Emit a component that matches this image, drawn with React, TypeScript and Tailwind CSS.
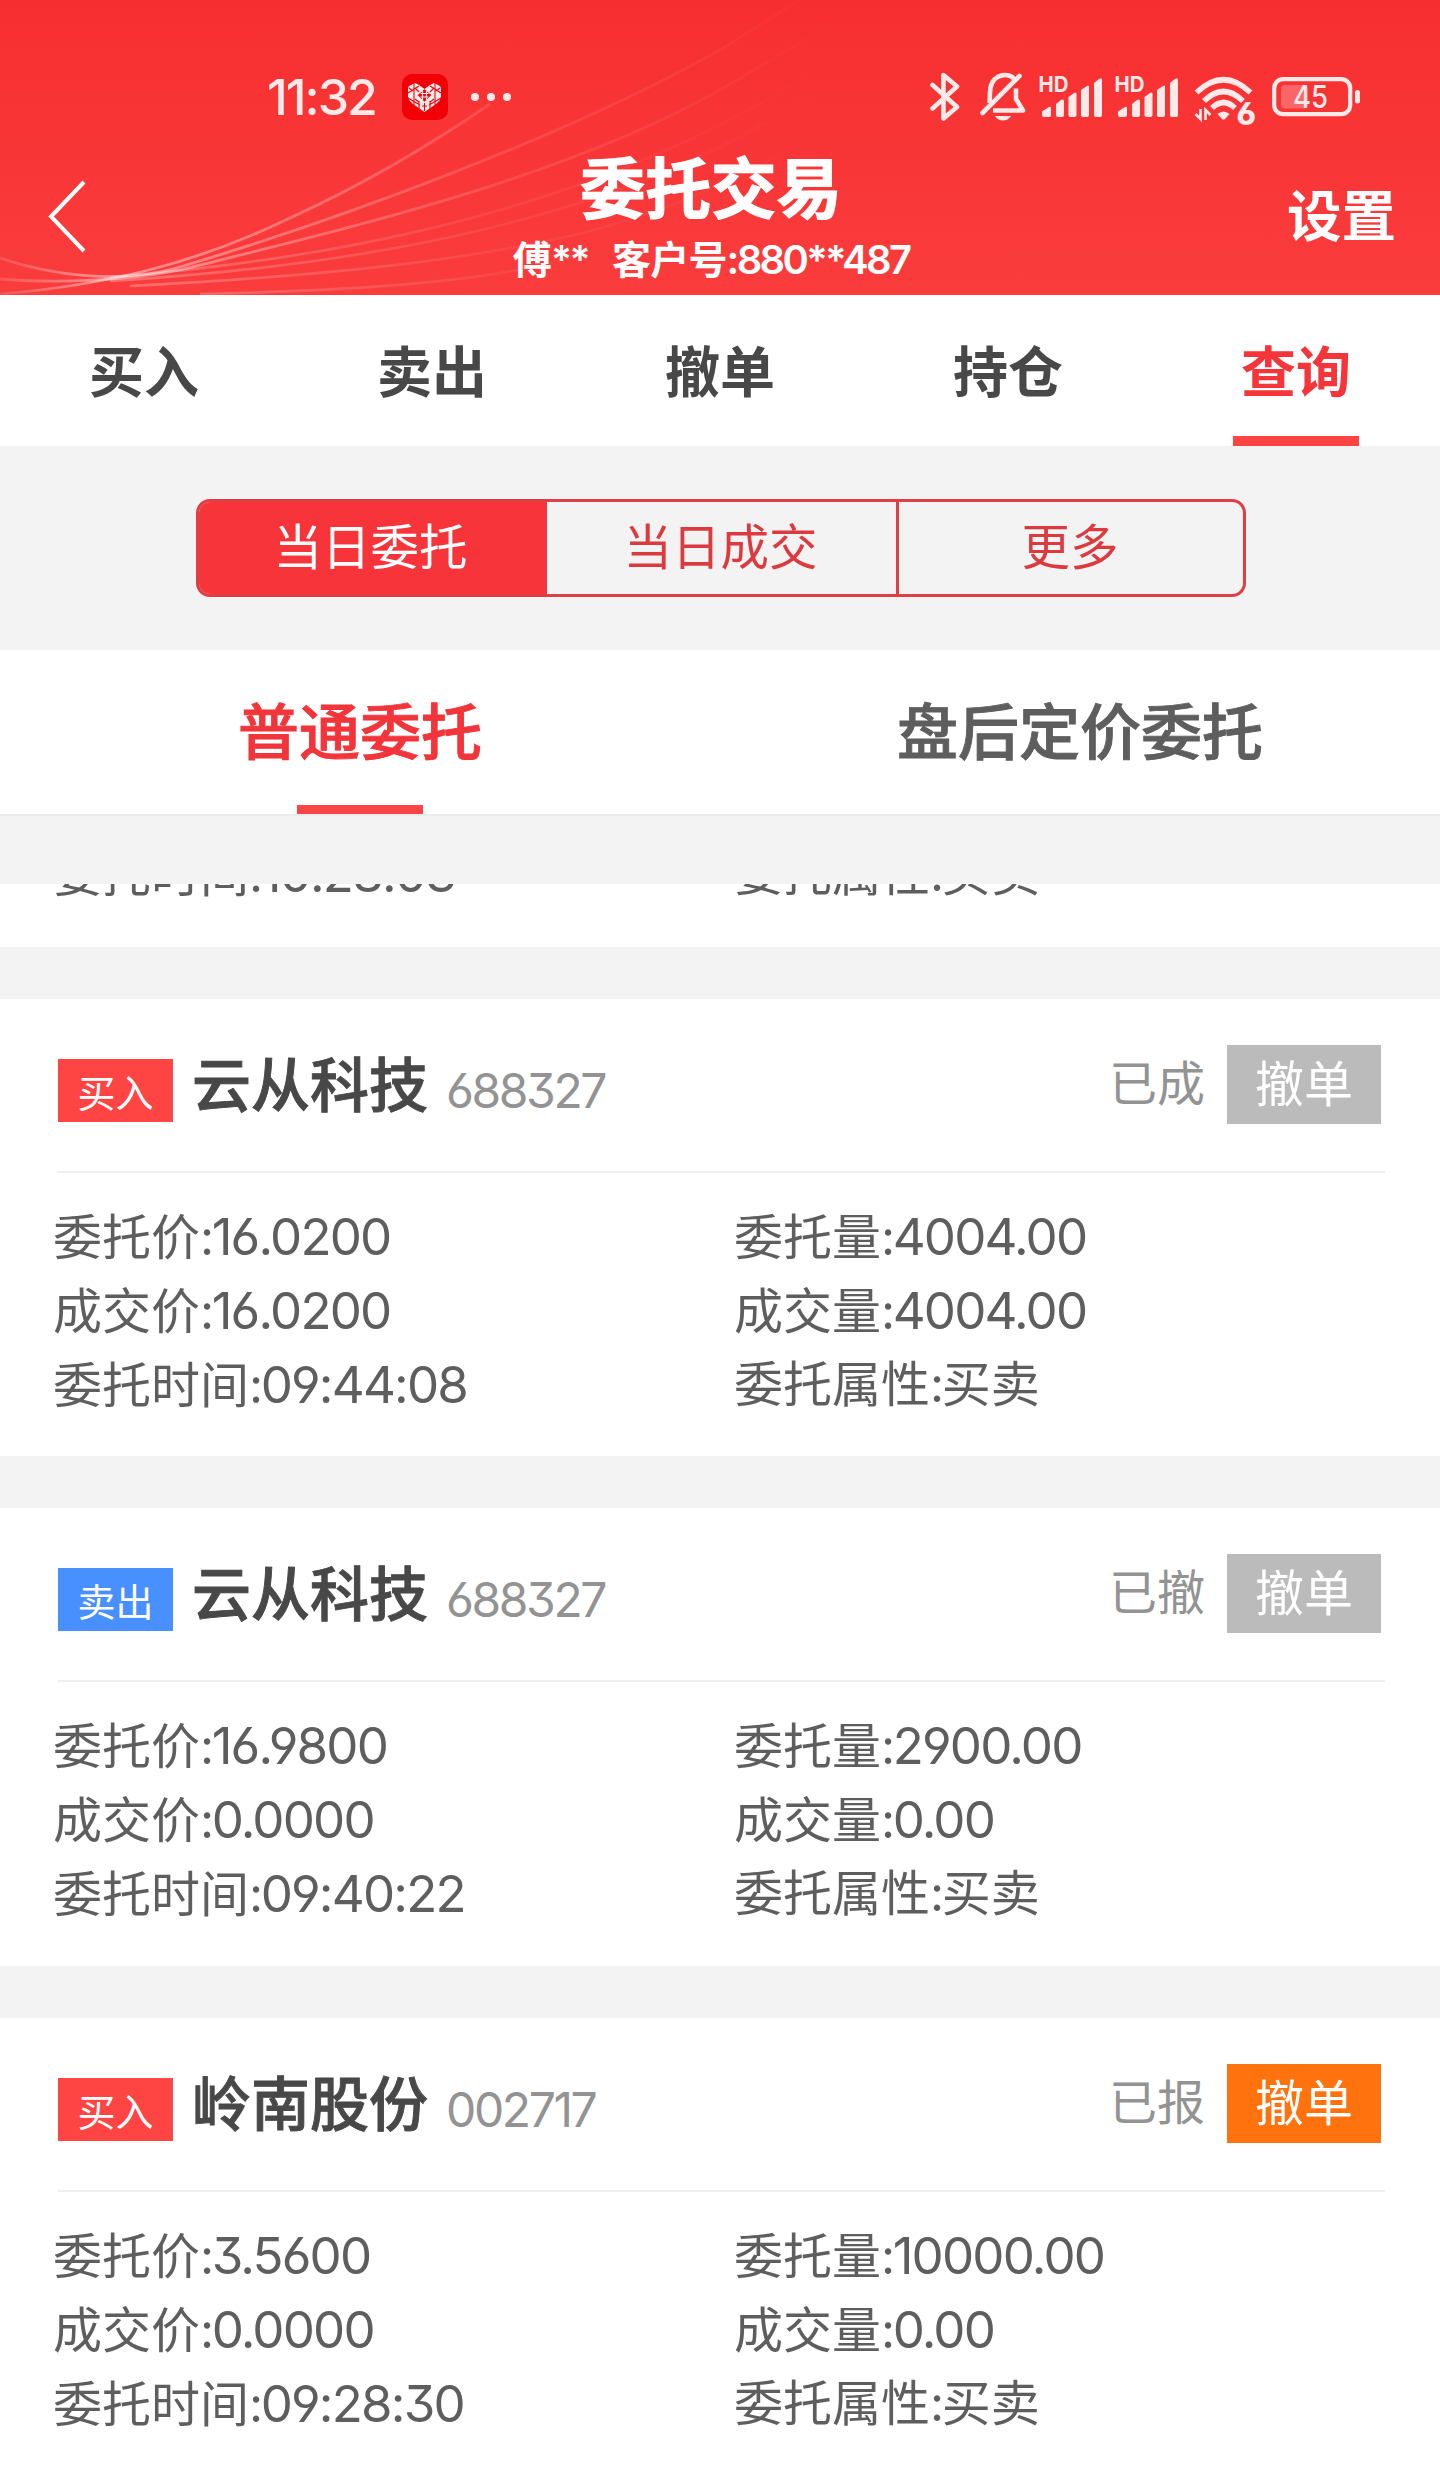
import { useState } from 'react'
import clsx from 'clsx'

type Order = {
    side: 'buy' | 'sell'
    name: string
    code: string
    status: string
    cancellable: boolean
    price: string
    amount: string
    dealPrice: string
    dealAmount: string
    time: string
}

const orders: Order[] = [
    {
        side: 'buy',
        name: '云从科技',
        code: '688327',
        status: '已成',
        cancellable: false,
        price: '16.0200',
        amount: '4004.00',
        dealPrice: '16.0200',
        dealAmount: '4004.00',
        time: '09:44:08',
    },
    {
        side: 'sell',
        name: '云从科技',
        code: '688327',
        status: '已撤',
        cancellable: false,
        price: '16.9800',
        amount: '2900.00',
        dealPrice: '0.0000',
        dealAmount: '0.00',
        time: '09:40:22',
    },
    {
        side: 'buy',
        name: '岭南股份',
        code: '002717',
        status: '已报',
        cancellable: true,
        price: '3.5600',
        amount: '10000.00',
        dealPrice: '0.0000',
        dealAmount: '0.00',
        time: '09:28:30',
    },
]

const mainTabs = ['买入', '卖出', '撤单', '持仓', '查询']
const segments = ['当日委托', '当日成交', '更多']
const orderTabs = ['普通委托', '盘后定价委托']

function HeaderWaves() {
    return (
        <svg className="absolute inset-0" width="1440" height="295" viewBox="0 0 1440 295" fill="none">
            <defs>
                <linearGradient id="wave" gradientUnits="userSpaceOnUse" x1="0" y1="0" x2="840" y2="0">
                    <stop offset="0" stopColor="#fff" stopOpacity="0.12" />
                    <stop offset="0.13" stopColor="#fff" stopOpacity="0.45" />
                    <stop offset="0.35" stopColor="#fff" stopOpacity="0.28" />
                    <stop offset="0.6" stopColor="#fff" stopOpacity="0.11" />
                    <stop offset="0.85" stopColor="#fff" stopOpacity="0.04" />
                    <stop offset="1" stopColor="#fff" stopOpacity="0" />
                </linearGradient>
            </defs>
            <g stroke="url(#wave)" strokeWidth="2.8">
                <path d="M0 294C110 285 200 262 292 217C360 186 420 152 490 104" />
                <path d="M0 258C50 275 120 285 180 267C330 222 560 140 720 50L800 0" />
                <path d="M0 279C60 284 130 280 180 270C340 230 560 180 720 90C780 55 830 25 860 5" />
            </g>
            <g stroke="url(#wave)" strokeWidth="2.6" opacity="0.6">
                <path d="M110 277C300 262 520 225 720 125C790 90 850 45 880 25" />
                <path d="M110 281C320 268 540 235 720 147C790 112 840 80 860 65" />
                <path d="M130 286C320 276 460 262 583 233C680 208 760 170 820 130" />
                <path d="M200 294C380 290 480 280 551 263" />
            </g>
        </svg>
    )
}

function HeartAppIcon() {
    return (
        <svg width="46" height="46" viewBox="0 0 46 46">
            <rect width="46" height="46" rx="10" fill="#f20008" />
            <path
                d="M6 15Q6 12 9 11L13 9Q16 10 22.500 15Q29 10 32 9L36 11Q39 12 39 15V23Q38 27 34 30L22.500 38L11 30Q7 27 6 23Z"
                fill="#ffecec"
            />
            <g stroke="#f20008" strokeWidth="1.100" fill="none">
                <path d="M12 9V31M33 9V31M6 19L17 12M39 19L28 12M6 24L18 31M39 24L27 31M17 27V36M28 27V36" />
                <path d="M7 14l4 3M38 14l-4 3M13 25l4 3M32 25l-4 3M13 14l4 4M32 14l-4 4M20 32h5M22.500 29v8" />
                <path d="M22.500 16L28.500 21L22.500 27L16.500 21Z" fill="#f20008" />
            </g>
            <path d="M18.500 19.500h8M18.500 23h8M20.500 17v9M24.500 17v9" stroke="#ffecec" strokeWidth="1.200" />
        </svg>
    )
}

function BluetoothIcon() {
    return (
        <svg width="30" height="50" viewBox="0 0 30 50" fill="none" stroke="#ffe9e9" strokeWidth="4.600" strokeLinecap="round" strokeLinejoin="round">
            <path d="M2.500 13L27 35L13.500 46.500V3L27 14.500L2.500 36.500" />
        </svg>
    )
}

function MuteIcon() {
    return (
        <svg width="46" height="50" viewBox="0 0 46 50" fill="none" stroke="#ffe9e9" strokeWidth="4.600" strokeLinecap="round" strokeLinejoin="round">
            <path d="M2.500 41L39.500 4" />
            <path d="M9.500 31C10 27 9.500 22 10.500 16C12.500 1 31 0 34.500 8" strokeLinecap="butt" />
            <path d="M36 16.500V27L43 38.500H13" strokeLinecap="butt" />
            <path d="M15 44H31Q28 48.500 23 48.500Q18 48.500 15 44Z" fill="#ffe9e9" stroke="none" />
        </svg>
    )
}

function SignalIcon() {
    return (
        <svg className="overflow-visible" width="64" height="46" viewBox="0 0 64 46" fill="#ffe9e9">
            <text x="-0.500" y="17" fontFamily="Inter, sans-serif" fontSize="21.500" fontWeight="700" textLength="30" lengthAdjust="spacingAndGlyphs">
                HD
            </text>
            <path d="M3 36.500L10 32Q12 31 12 33V40Q12 42 10 42H5Q3 42 3 40Z" />
            <path d="M17 29L22 25Q25 23.500 25 26V40Q25 42 23 42H19Q17 42 17 40Z" />
            <path d="M29.500 22L35 18Q37.500 16.500 37.500 19V40Q37.500 42 35.500 42H31.500Q29.500 42 29.500 40Z" />
            <path d="M42 15L48 11Q50 9.500 50 12V40Q50 42 48 42H44Q42 42 42 40Z" />
            <path d="M55 8L60 4Q63 2 63 5V40Q63 42 61 42H57Q55 42 55 40Z" />
        </svg>
    )
}

function WifiIcon() {
    return (
        <svg className="overflow-visible" width="62" height="52" viewBox="0 0 62 52" fill="none" stroke="#ffe9e9">
            <path d="M2.500 16.500Q29.500 -9 56.500 16.500" strokeWidth="5.500" />
            <path d="M10 25Q29.500 6 49 25" strokeWidth="5.500" />
            <path d="M18 32Q29.500 21 41 32" strokeWidth="5.500" />
            <path d="M23.500 38Q29.500 33 35.500 38L31 43Q29.500 44.500 28 43Z" fill="#ffe9e9" stroke="none" />
            <path d="M6.500 33V43L1.500 38M11.500 44V34L16.500 39" strokeWidth="2.600" />
            <text x="42.500" y="48.500" fontFamily="Inter, sans-serif" fontSize="31" fontWeight="800" fill="#ffe9e9" stroke="none">
                6
            </text>
        </svg>
    )
}

function BatteryIcon() {
    return (
        <svg width="90" height="40" viewBox="0 0 90 40">
            <rect x="2.200" y="2.200" width="76" height="35" rx="9" fill="none" stroke="#ffe9e9" strokeWidth="4.200" />
            <rect x="9" y="8" width="27" height="23.500" rx="4" fill="#fff" fillOpacity="0.25" />
            <rect x="83" y="13" width="5" height="13.500" rx="2.500" fill="#ffe9e9" />
            <text x="21" y="31" fontFamily="Inter, sans-serif" fontSize="31" fontWeight="500" fill="#ffe9e9" textLength="35" lengthAdjust="spacingAndGlyphs">
                45
            </text>
        </svg>
    )
}

function StatusBar() {
    return (
        <div className="relative flex h-[122px] items-end">
            <span className="ml-[267px] h-12 w-[111px] text-[50px] leading-[47px] font-medium tracking-[-2px] whitespace-nowrap text-[#ffe9e9]">
                11:32
            </span>
            <div className="ml-6 pb-0.5">
                <HeartAppIcon />
            </div>
            <div className="ml-[23px] flex gap-2 pb-[21px]">
                <i className="size-2 rounded-full bg-[#ffe9e9]" />
                <i className="size-2 rounded-full bg-[#ffe9e9]" />
                <i className="size-2 rounded-full bg-[#ffe9e9]" />
            </div>
            <div className="mr-[78px] -mb-1.5 ml-auto flex items-start">
                <BluetoothIcon />
                <div className="ml-5">
                    <MuteIcon />
                </div>
                <div className="mt-[3px] ml-[13px] flex gap-3">
                    <SignalIcon />
                    <SignalIcon />
                </div>
                <div className="mt-1 ml-[15px]">
                    <WifiIcon />
                </div>
                <div className="mt-[5px] ml-4">
                    <BatteryIcon />
                </div>
            </div>
        </div>
    )
}

function Field({ label, value, plain }: { label: string; value: string; plain?: boolean }) {
    return (
        <p className="whitespace-nowrap">
            {label}
            <span className="tracking-[-2.500px]">:</span>
            <span className={clsx(!plain && 'text-[51px] tracking-[-1.800px]')}>{value}</span>
        </p>
    )
}

function OrderCard({ order }: { order: Order }) {
    return (
        <section className="mb-[52px] h-[457.500px] bg-white">
            <div className="mr-[55px] ml-[58px] flex h-[174px] border-b-2 border-[#efefef]">
                <span
                    className={clsx(
                        'mt-[60px] h-[63px] w-[115px] text-center text-[38px] leading-[68px] text-white',
                        order.side === 'buy' ? 'bg-[#ff4444]' : 'bg-[#488fff]',
                    )}
                >
                    {order.side === 'buy' ? '买入' : '卖出'}
                </span>
                <h2 className="mt-11 ml-[19px] text-[59px] leading-[86px] font-medium text-[#484848] [-webkit-text-stroke:0.9px]">
                    {order.name}
                </h2>
                <span className="mt-[62px] ml-[18px] text-[48px] leading-[60px] tracking-[-2.400px] text-[#939393]">
                    {order.code}
                </span>
                <span className="mt-[52px] ml-auto text-[48px] leading-[66px] text-[#939393]">{order.status}</span>
                <button
                    className={clsx(
                        'mt-[46px] mr-1 ml-[22px] h-[79px] w-[154px] text-[49px] leading-[75px] text-white',
                        order.cancellable ? 'bg-[#ff720d]' : 'bg-[#bbbbbb]',
                    )}
                >
                    撤单
                </button>
            </div>
            <div className="grid grid-cols-[681px_1fr] pt-[27px] pl-[53px] text-[49px] leading-[73px] text-[#5e5e5e]">
                <Field label="委托价" value={order.price} />
                <Field label="委托量" value={order.amount} />
                <Field label="成交价" value={order.dealPrice} />
                <Field label="成交量" value={order.dealAmount} />
                <Field label="委托时间" value={order.time} />
                <Field label="委托属性" value="买卖" plain />
            </div>
        </section>
    )
}

export default function App() {
    const [tab, setTab] = useState(4)
    const [segment, setSegment] = useState(0)
    const [orderTab, setOrderTab] = useState(0)

    return (
        <div className="h-[2467px] w-[1440px] overflow-hidden bg-[#f3f3f3] font-['Inter','Noto_Sans_CJK_SC',sans-serif] [font-feature-settings:'cv03','cv04']">
            <header className="relative h-[295px] bg-gradient-to-b from-[#f72e2f] to-[#fa3c3d] text-white">
                <HeaderWaves />
                <StatusBar />
                <div className="relative grid grid-cols-[400px_622px_1fr]">
                    <svg className="mt-[58px] ml-12" width="40" height="74" viewBox="0 0 40 74" fill="none" stroke="#fff" strokeWidth="4">
                        <path d="M36 2L3 36.500L36 71" />
                    </svg>
                    <div className="text-center">
                        <h1 className="mt-[22px] text-[65.500px] leading-[92px] font-bold [-webkit-text-stroke:1.200px]">委托交易</h1>
                        <p className="mt-0.5 text-[39px] leading-[44px] font-semibold tracking-[-0.800px] whitespace-pre">
                            傅<span className="mr-6 tracking-[-2.500px]">**</span>客户号
                            <span className="text-[40px] tracking-[-2.700px]">:880**487</span>
                        </p>
                    </div>
                    <button className="mt-[59px] mr-11 h-[70px] text-right text-[54.500px] leading-[70px] font-bold">设置</button>
                </div>
            </header>

            <nav className="grid h-[151px] grid-cols-5 bg-white">
                {mainTabs.map((label, i) => (
                    <button
                        key={label}
                        onClick={() => setTab(i)}
                        className={clsx(
                            'flex flex-col items-center justify-between text-[55px] font-bold',
                            i === tab ? 'text-[#f5353a]' : 'text-[#484848]',
                        )}
                    >
                        <span className="mt-[34px] leading-[86px]">{label}</span>
                        {i === tab && <i className="h-2.5 w-[126px] bg-[#ff4444]" />}
                    </button>
                ))}
            </nav>

            {/* Query type */}
            <div className="flex h-[204px] justify-center pt-[53px]">
                <div className="ml-0.5 grid h-[98px] w-[1050px] grid-cols-[348px_352px_1fr] divide-x-3 divide-[#dd3f45] overflow-hidden rounded-[14px] border-3 border-[#dd3f45]">
                    {segments.map((label, i) => (
                        <button
                            key={label}
                            onClick={() => setSegment(i)}
                            className={clsx(
                                'pr-0.5 text-[48.500px] leading-[88px]',
                                i === segment ? 'border-[#f63439] bg-[#f63439] text-white' : 'text-[#dd3a40]',
                            )}
                        >
                            {label}
                        </button>
                    ))}
                </div>
            </div>

            <div className="grid h-[166px] grid-cols-2 border-b-2 border-[#ececec] bg-white">
                {orderTabs.map((label, i) => (
                    <button
                        key={label}
                        onClick={() => setOrderTab(i)}
                        className={clsx(
                            'flex flex-col items-center justify-between text-[61px] font-medium [-webkit-text-stroke:0.9px]',
                            i === orderTab ? 'text-[#f2353a]' : 'text-[#5e5e5e]',
                        )}
                    >
                        <span className="mt-[39px] leading-[88px]">{label}</span>
                        {i === orderTab && <i className="h-[9px] w-[126px] bg-[#fb4444]" />}
                    </button>
                ))}
            </div>

            <main className="pt-[68px] [font-feature-settings:'cv03','cv04','cv09']">
                {/* Tail of the order scrolled under the tabs */}
                <section className="mb-[51.500px] flex h-[63px] flex-col justify-end overflow-hidden bg-white">
                    <div className="mb-9 grid shrink-0 grid-cols-[681px_1fr] pl-[53px] text-[49px] leading-[73px] text-[#5e5e5e]">
                        <Field label="委托时间" value="10:28:03" />
                        <Field label="委托属性" value="买卖" plain />
                    </div>
                </section>
                {orders.map((order) => (
                    <OrderCard key={order.time} order={order} />
                ))}
            </main>
        </div>
    )
}
